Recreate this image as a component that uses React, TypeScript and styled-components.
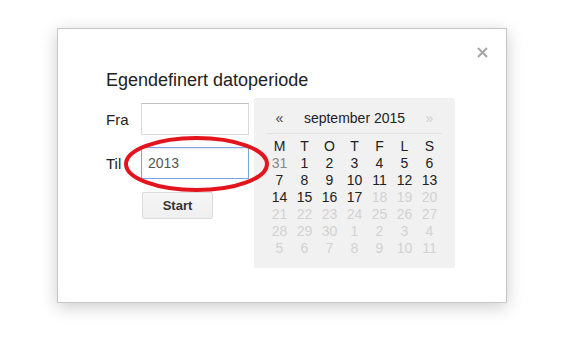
import React from "react";
import styled, { createGlobalStyle } from "styled-components";

const Global = createGlobalStyle`
  html, body { margin: 0; padding: 0; background: #ffffff; }
  body { font-family: "Liberation Sans", Arial, sans-serif; color: #222; }
  * { box-sizing: border-box; }
`;

const Page = styled.div`
  position: relative;
  width: 563px;
  height: 343px;
  padding: 28px 0 0 57px;
  overflow: hidden;
`;

const Dialog = styled.div`
  position: relative;
  width: 450px;
  height: 275px;
  background: #fff;
  border: 1px solid #c6c6c6;
  box-shadow: 0 4px 16px rgba(0, 0, 0, 0.2);
  padding: 39px 0 0 48px;
`;

const Close = styled.button`
  position: absolute;
  top: 18px;
  right: 18px;
  width: 11px;
  height: 11px;
  padding: 0;
  border: 0;
  background: none;
  display: flex;
  cursor: pointer;
`;

const Title = styled.h1`
  margin: 0 0 6px;
  font-size: 18px;
  line-height: 24px;
  font-weight: normal;
  color: #222;
`;

const Body = styled.div`
  display: flex;
  align-items: flex-start;
  gap: 5px;
`;

const Form = styled.div`
  display: grid;
  grid-template-columns: 35px 108px;
  grid-auto-rows: auto;
  row-gap: 12px;
  align-items: center;
  padding-top: 5px;
`;

const Label = styled.label`
  font-size: 15px;
  line-height: 17px;
  color: #222;
`;

const Input = styled.input<{ $focused?: boolean }>`
  width: 108px;
  height: 32px;
  margin: 0;
  padding: 0 6px;
  font-family: "Liberation Sans", Arial, sans-serif;
  font-size: 14px;
  color: #555;
  background: #fff;
  outline: none;
  border: 1px solid ${(p) => (p.$focused ? "#7ca3e6" : "#d9d9d9")};
  border-top-color: ${(p) => (p.$focused ? "#7ca3e6" : "#c0c0c0")};
  box-shadow: ${(p) => (p.$focused ? "inset 0 1px 2px rgba(0,0,0,0.1)" : "none")};
`;

const ButtonCell = styled.div`
  grid-column: 2;
  padding-top: 1px;
  padding-left: 1px;
`;

const StartButton = styled.button`
  width: 71px;
  height: 27px;
  padding: 0;
  font-family: "Liberation Sans", Arial, sans-serif;
  font-size: 13px;
  font-weight: bold;
  color: #333;
  background: linear-gradient(#f6f6f6, #efefef);
  border: 1px solid #dcdcdc;
  border-radius: 2px;
`;

const Calendar = styled.div`
  width: 201px;
  background: #f1f1f1;
  border-radius: 2px;
  padding: 0 13px 11px;
`;

const CalHeader = styled.div`
  display: grid;
  grid-template-columns: 25px 125px 25px;
  padding: 12px 0 6px;
  border-bottom: 1px solid #e2e2e2;
  font-size: 14px;
  line-height: 17px;
  text-align: center;
`;

const Nav = styled.span<{ $disabled?: boolean }>`
  color: ${(p) => (p.$disabled ? "#cfcfcf" : "#444")};
`;

const Month = styled.span`
  color: #222;
`;

const Grid = styled.div`
  display: grid;
  grid-template-columns: repeat(7, 25px);
  grid-auto-rows: 17px;
  margin-top: 4px;
  font-size: 14px;
  line-height: 17px;
  text-align: center;
`;

type Tone = "head" | "prev" | "on" | "off";

const Cell = styled.span<{ $tone: Tone }>`
  color: ${(p) =>
    p.$tone === "prev" ? "#888" : p.$tone === "off" ? "#d2d2d2" : "#222"};
`;

const Annotation = styled.svg`
  position: absolute;
  left: 120px;
  top: 132px;
  pointer-events: none;
`;

const heads = ["M", "T", "O", "T", "F", "L", "S"];

const days: { n: number; t: Tone }[] = [
  { n: 31, t: "prev" },
  ...Array.from({ length: 30 }, (_, i) => ({
    n: i + 1,
    t: (i + 1 <= 17 ? "on" : "off") as Tone,
  })),
  ...Array.from({ length: 11 }, (_, i) => ({ n: i + 1, t: "off" as Tone })),
];

export default function App() {
  return (
    <>
      <Global />
      <Page>
        <Dialog>
          <Close aria-label="Lukk">
            <svg width="11" height="11" viewBox="0 0 11 11">
              <path
                d="M1 1 L10 10 M10 1 L1 10"
                stroke="#a6a6a6"
                strokeWidth="2"
                fill="none"
              />
            </svg>
          </Close>
          <Title>Egendefinert datoperiode</Title>
          <Body>
            <Form>
              <Label>Fra</Label>
              <Input />
              <Label>Til</Label>
              <Input $focused defaultValue="2013" />
              <ButtonCell>
                <StartButton>Start</StartButton>
              </ButtonCell>
            </Form>
            <Calendar>
              <CalHeader>
                <Nav>«</Nav>
                <Month>september 2015</Month>
                <Nav $disabled>»</Nav>
              </CalHeader>
              <Grid>
                {heads.map((h, i) => (
                  <Cell key={"h" + i} $tone="head">
                    {h}
                  </Cell>
                ))}
                {days.map((d, i) => (
                  <Cell key={"d" + i} $tone={d.t}>
                    {d.n}
                  </Cell>
                ))}
              </Grid>
            </Calendar>
          </Body>
        </Dialog>
        <Annotation width="155" height="65" viewBox="0 0 155 65">
          <ellipse
            cx="76.5"
            cy="32"
            rx="70.5"
            ry="26"
            fill="none"
            stroke="#e3141b"
            strokeWidth="4"
          />
        </Annotation>
      </Page>
    </>
  );
}
